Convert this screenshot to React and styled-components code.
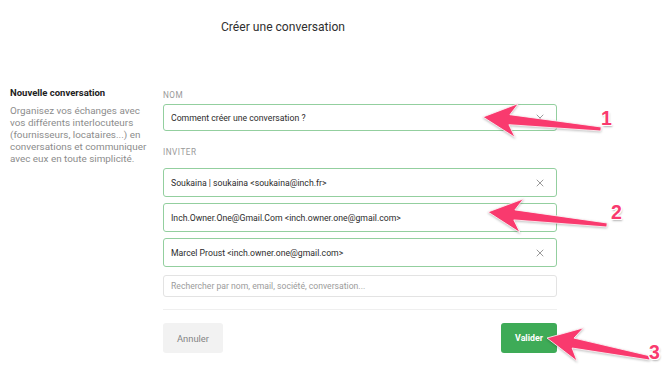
import React from "react";
import styled, { createGlobalStyle } from "styled-components";

const Global = createGlobalStyle`
  html, body { margin: 0; padding: 0; background: #fff; }
  body { font-family: Roboto, "Liberation Sans", sans-serif; }
  * { box-sizing: border-box; }
`;

const Page = styled.div`
  position: relative;
  width: 670px;
  height: 367px;
  overflow: hidden;
  background: #fff;
`;

const Header = styled.header`
  padding: 19px 0 0 221px;
  height: 35px;
`;

const Title = styled.h1`
  margin: 0;
  font-size: 12.1px;
  line-height: 16px;
  font-weight: 400;
  color: #2f2f2f;
`;

const Main = styled.main`
  display: flex;
  margin-top: 51px;
`;

const Aside = styled.aside`
  flex: 0 0 163px;
  padding-left: 10px;
  padding-right: 10px;
`;

const AsideTitle = styled.h2`
  margin: 0;
  font-size: 9.5px;
  line-height: 13px;
  font-weight: 700;
  color: #222;
`;

const AsideText = styled.p`
  margin: 6px 0 0;
  font-size: 9.9px;
  line-height: 12px;
  color: #8c8c8c;
`;

const Line = styled.span`
  display: block;
  white-space: nowrap;
`;

const Form = styled.section`
  width: 394px;
  padding-top: 4px;
  display: flex;
  flex-direction: column;
`;

const Label = styled.div`
  font-size: 8.2px;
  line-height: 10px;
  letter-spacing: 0.5px;
  text-transform: uppercase;
  color: #9a9a9a;
  margin-top: ${(p) => p.$mt || 0}px;
  margin-bottom: ${(p) => p.$mb || 4}px;
`;

const Field = styled.div`
  display: flex;
  align-items: center;
  height: ${(p) => p.$h || 29}px;
  padding: 0 12px 0 7px;
  border: 1px solid ${(p) => (p.$muted ? "#e3e3e3" : "#93cf9f")};
  border-radius: 3px;
  background: #fff;
  font-size: ${(p) => (p.$muted ? 8.65 : 8.7)}px;
  color: ${(p) => (p.$muted ? "#9b9b9b" : "#2c2c2c")};
  margin-top: ${(p) => p.$mt || 0}px;
`;

const FieldText = styled.span`
  flex: 1;
  white-space: nowrap;
  overflow: hidden;
`;

const Rows = styled.div`
  display: flex;
  flex-direction: column;
  gap: 6px;
`;

const Divider = styled.hr`
  margin: 12px 0 0;
  border: 0;
  border-top: 1px solid #efefef;
  height: 0;
`;

const Actions = styled.div`
  display: flex;
  justify-content: space-between;
  margin-top: 13px;
`;

const Button = styled.button`
  height: 30px;
  padding: 0;
  width: ${(p) => p.$w}px;
  border: 0;
  border-radius: 3px;
  font-family: Roboto, "Liberation Sans", sans-serif;
  font-size: ${(p) => (p.$primary ? 8.8 : 9.4)}px;
  font-weight: ${(p) => (p.$primary ? 700 : 400)};
  background: ${(p) => (p.$primary ? "#3eab57" : "#f2f2f2")};
  color: ${(p) => (p.$primary ? "#fff" : "#858585")};
`;

const Overlay = styled.svg`
  position: absolute;
  inset: 0;
  pointer-events: none;
  filter: drop-shadow(0 1px 1px rgba(0, 0, 0, 0.25));
`;

const Num = styled.span`
  position: absolute;
  left: ${(p) => p.$x}px;
  top: ${(p) => p.$y}px;
  font-family: "Liberation Sans", Arial, sans-serif;
  font-weight: 700;
  font-size: 19.5px;
  line-height: 1;
  color: #f93a6e;
  text-shadow: -1px -1px 0 #fff, 1px -1px 0 #fff, -1px 1px 0 #fff, 1px 1px 0 #fff,
    0 -1px 0 #fff, 0 1px 0 #fff, -1px 0 0 #fff, 1px 0 0 #fff, 1px 2px 2px rgba(0,0,0,0.3);
`;

const Close = () => (
  <svg width="8" height="8" viewBox="0 0 8 8">
    <path d="M1 1L7 7M7 1L1 7" stroke="#9a9a9a" strokeWidth="1" strokeLinecap="round" />
  </svg>
);

function arrow(tip, tail, L, W, w1, w2) {
  const dx = tail[0] - tip[0];
  const dy = tail[1] - tip[1];
  const len = Math.hypot(dx, dy);
  const d = [dx / len, dy / len];
  const p = [-d[1], d[0]];
  const at = (o, k, s) => [o[0] + d[0] * k + p[0] * s, o[1] + d[1] * k + p[1] * s];
  const pts = [
    tip,
    at(tip, L, -W),
    at(tip, L * 0.78, -w1),
    at(tail, 0, -w2),
    at(tail, 0, w2),
    at(tip, L * 0.78, w1),
    at(tip, L, W),
  ];
  return pts.map((q) => q[0].toFixed(1) + "," + q[1].toFixed(1)).join(" ");
}

const arrows = [
  { tip: [483, 117], tail: [601, 129] },
  { tip: [488, 212], tail: [607, 225] },
  { tip: [547, 338], tail: [650, 358] },
];

const invites = [
  "Soukaina | soukaina <soukaina@inch.fr>",
  "Inch.Owner.One@Gmail.Com <inch.owner.one@gmail.com>",
  "Marcel Proust <inch.owner.one@gmail.com>",
];

const closable = [true, false, true];

const description = [
  "Organisez vos échanges avec",
  "vos différents interlocuteurs",
  "(fournisseurs, locataires...) en",
  "conversations et communiquer",
  "avec eux en toute simplicité.",
];

export default function App() {
  return (
    <Page>
      <Global />
      <Header>
        <Title>Créer une conversation</Title>
      </Header>
      <Main>
        <Aside>
          <AsideTitle>Nouvelle conversation</AsideTitle>
          <AsideText>
            {description.map((l) => (
              <Line key={l}>{l}</Line>
            ))}
          </AsideText>
        </Aside>
        <Form>
          <Label>Nom</Label>
          <Field $h={27}>
            <FieldText>Comment créer une conversation ?</FieldText>
            <Close />
          </Field>
          <Label $mt={16} $mb={11}>Inviter</Label>
          <Rows>
            {invites.map((t, i) => (
              <Field key={t}>
                <FieldText>{t}</FieldText>
                {closable[i] && <Close />}
              </Field>
            ))}
          </Rows>
          <Field $muted $h={22} $mt={8}>
            <FieldText>Rechercher par nom, email, société, conversation...</FieldText>
          </Field>
          <Divider />
          <Actions>
            <Button $w={60}>Annuler</Button>
            <Button $w={56} $primary>Valider</Button>
          </Actions>
        </Form>
      </Main>
      <Overlay width="670" height="367" viewBox="0 0 670 367">
        {arrows.map((a, i) => (
          <polygon
            key={i}
            points={arrow(a.tip, a.tail, 34, 17, 5, 2)}
            fill="#f93a6e"
            stroke="#fff"
            strokeWidth="0.8"
            strokeLinejoin="round"
          />
        ))}
      </Overlay>
      <Num $x={601} $y={109}>1</Num>
      <Num $x={611} $y={203}>2</Num>
      <Num $x={649} $y={343}>3</Num>
    </Page>
  );
}
